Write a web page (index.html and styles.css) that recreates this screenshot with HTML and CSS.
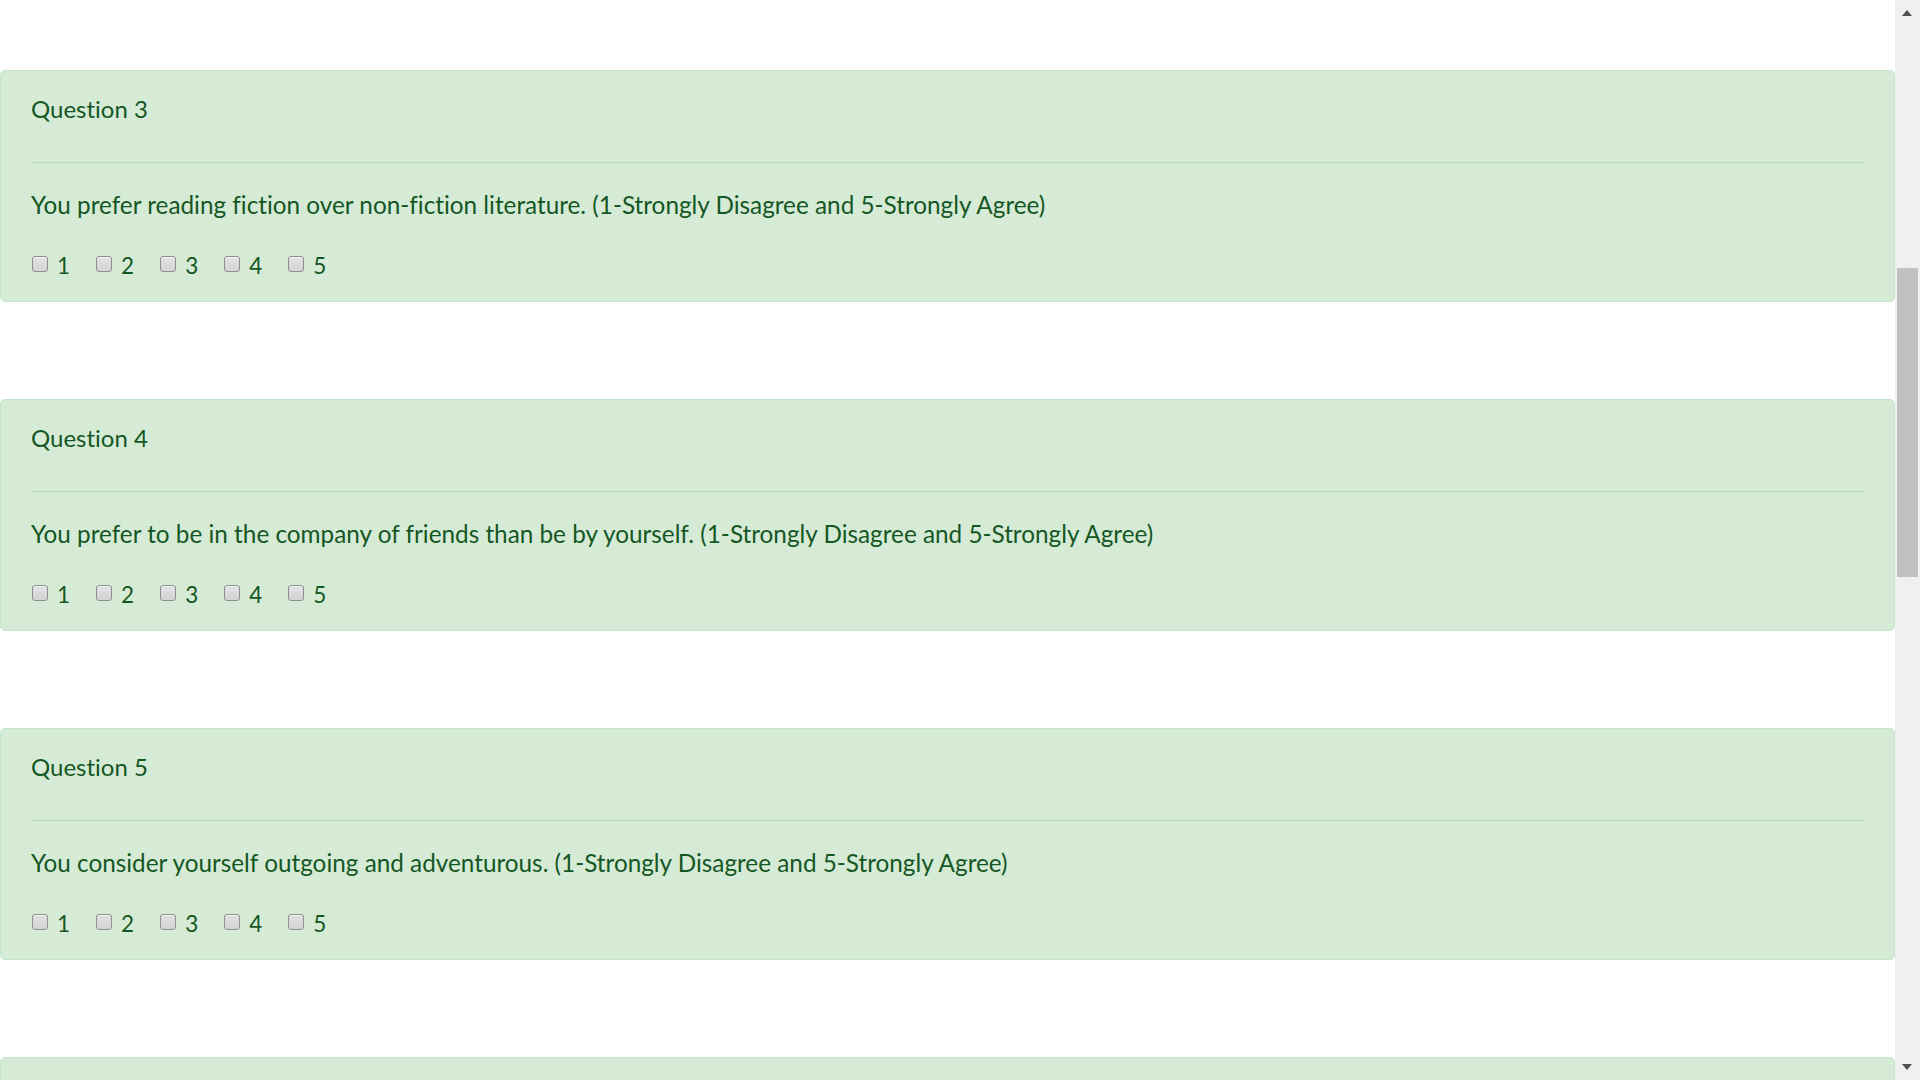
FILE: index.html
```html
<!DOCTYPE html>
<html lang="en">
<head>
<meta charset="utf-8">
<title>Questionnaire</title>
<link rel="stylesheet" href="styles.css">
</head>
<body>
<main class="page">
  <section class="card">
    <h4 class="card-title">Question 3</h4>
    <hr class="divider">
    <p class="question">You prefer reading fiction over non-fiction literature. (1-Strongly Disagree and 5-Strongly Agree)</p>
    <div class="options">
      <label class="opt"><input type="checkbox" class="box"><span>1</span></label>
      <label class="opt"><input type="checkbox" class="box"><span>2</span></label>
      <label class="opt"><input type="checkbox" class="box"><span>3</span></label>
      <label class="opt"><input type="checkbox" class="box"><span>4</span></label>
      <label class="opt"><input type="checkbox" class="box"><span>5</span></label>
    </div>
  </section>
  <section class="card">
    <h4 class="card-title">Question 4</h4>
    <hr class="divider">
    <p class="question">You prefer to be in the company of friends than be by yourself. (1-Strongly Disagree and 5-Strongly Agree)</p>
    <div class="options">
      <label class="opt"><input type="checkbox" class="box"><span>1</span></label>
      <label class="opt"><input type="checkbox" class="box"><span>2</span></label>
      <label class="opt"><input type="checkbox" class="box"><span>3</span></label>
      <label class="opt"><input type="checkbox" class="box"><span>4</span></label>
      <label class="opt"><input type="checkbox" class="box"><span>5</span></label>
    </div>
  </section>
  <section class="card">
    <h4 class="card-title">Question 5</h4>
    <hr class="divider">
    <p class="question">You consider yourself outgoing and adventurous. (1-Strongly Disagree and 5-Strongly Agree)</p>
    <div class="options">
      <label class="opt"><input type="checkbox" class="box"><span>1</span></label>
      <label class="opt"><input type="checkbox" class="box"><span>2</span></label>
      <label class="opt"><input type="checkbox" class="box"><span>3</span></label>
      <label class="opt"><input type="checkbox" class="box"><span>4</span></label>
      <label class="opt"><input type="checkbox" class="box"><span>5</span></label>
    </div>
  </section>
  <section class="card card-peek" aria-hidden="true"></section>
</main>
<div class="scrollbar" aria-hidden="true">
  <span class="arrow arrow-up"></span>
  <span class="thumb"></span>
  <span class="arrow arrow-down"></span>
</div>
</body>
</html>
```
FILE: styles.css
```css
html, body {
  margin: 0;
  padding: 0;
  height: 100%;
  overflow: hidden;
  background: #ffffff;
}

body {
  font-family: "Lato", "Open Sans", sans-serif;
  font-variant-ligatures: none;
  color: #155724;
}

.page {
  width: 1895px;
  padding-top: 70px;
  box-sizing: border-box;
}

.card {
  background: #d5ebd6;
  border: 1px solid #c3e6cb;
  border-radius: 5px;
  padding: 19px 30px 18px 30px;
  margin: 0 0 97px 0;
}

.card-peek {
  height: 60px;
  padding: 0;
}

.card-title {
  margin: 0;
  font-size: 24px;
  font-weight: 400;
  line-height: 37px;
}

.divider {
  margin: 35px 0 23px 0;
  border: 0;
  border-top: 1px solid #b1dfbb;
  height: 0;
}

.question {
  margin: 0;
  font-size: 24.3px;
  line-height: 37px;
}

.options {
  margin-top: 25px;
  font-size: 22.5px;
  line-height: 35px;
  display: flex;
}

.opt {
  display: inline-flex;
  align-items: center;
  margin-right: 25px;
}

.box {
  appearance: none;
  -webkit-appearance: none;
  width: 16px;
  height: 16px;
  margin: 0 9px 0 1px;
  border: 1px solid #8f8f8f;
  border-radius: 3px;
  background: linear-gradient(#e2e2e2, #d3d3d3);
  box-shadow: inset 0 1px 0 #f2f2f2;
  box-sizing: border-box;
  position: relative;
  top: -2px;
}

.scrollbar {
  position: fixed;
  top: 0;
  right: 0;
  width: 25px;
  height: 1080px;
  background: #f0f0f0;
}

.thumb {
  position: absolute;
  left: 2px;
  top: 268px;
  width: 21px;
  height: 309px;
  background: #c1c1c1;
}

.arrow {
  position: absolute;
  left: 7px;
  width: 0;
  height: 0;
  border-left: 5.5px solid transparent;
  border-right: 5.5px solid transparent;
}

.arrow-up {
  top: 10px;
  border-bottom: 6px solid #505050;
}

.arrow-down {
  top: 1064px;
  border-top: 6px solid #505050;
}
```
